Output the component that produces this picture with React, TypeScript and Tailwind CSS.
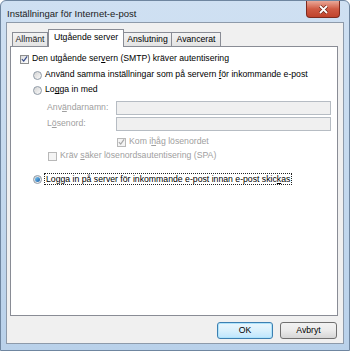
import React from "react";

const font = { fontFamily: '"Liberation Sans", Arial, sans-serif' };

function Check({ disabled = false, checked = false }: { disabled?: boolean; checked?: boolean }) {
  return (
    <div
      className={
        "w-[9px] h-[9px] shrink-0 border flex items-center justify-center " +
        (disabled
          ? "border-[#b8b8b8] bg-[#f4f4f4]"
          : "border-[#8e8f8f] bg-gradient-to-br from-[#dcdcdc] to-[#ffffff]")
      }
    >
      {checked && (
        <svg width="8" height="8" viewBox="0 0 8 8">
          <path
            d="M1 4.2 L3.1 6.4 L7 1"
            fill="none"
            stroke={disabled ? "#a9a9a9" : "#3b4f8c"}
            strokeWidth="1.4"
          />
        </svg>
      )}
    </div>
  );
}

function Radio({ selected = false }: { selected?: boolean }) {
  return (
    <div className="w-[9px] h-[9px] shrink-0 rounded-full border border-[#8f9aa6] bg-gradient-to-br from-[#d4d4d4] to-[#fafafa] flex items-center justify-center">
      {selected && (
        <div className="w-[5px] h-[5px] rounded-full bg-gradient-to-br from-[#7ecbf5] to-[#1a5fa8]" />
      )}
    </div>
  );
}

const U = ({ c }: { c: string }) => <span className="underline underline-offset-[1px]">{c}</span>;

export default function App() {
  return (
    <div
      className="w-[350px] h-[351px] flex flex-col rounded-t-[6px] border border-[#6f86a0] bg-gradient-to-b from-[#cfe0f2] via-[#c4d9ee] to-[#b9d1ea] text-[8.7px] text-black overflow-hidden"
      style={font}
    >
      {/* Title bar */}
      <div className="h-[21px] shrink-0 flex items-start">
        <div className="pl-[6px] pt-[7px] text-[9.5px] leading-[11px] text-[#1b1b1b]">
          Inställningar för Internet-e-post
        </div>
        <div className="ml-auto mr-[9px] w-[34px] h-[17px] rounded-b-[4px] border border-t-0 border-[#7e2a1e] bg-gradient-to-b from-[#e9a898] via-[#cf5a43] to-[#c0432c] flex items-center justify-center">
          <svg width="11" height="9" viewBox="0 0 11 9">
            <path d="M2 1 L9 8 M9 1 L2 8" stroke="#6b2417" strokeWidth="3.2" />
            <path d="M2 1 L9 8 M9 1 L2 8" stroke="#ffffff" strokeWidth="1.8" />
          </svg>
        </div>
      </div>

      {/* Client area */}
      <div className="flex-1 mx-[5px] mb-[6px] border border-[#8d9aaa] bg-[#f0f0f0] flex flex-col pl-[3px] pr-[5px] pt-[6px]">
        {/* Tabs */}
        <div className="flex items-end h-[17px] pl-[2px] relative z-10">
          <div className="h-[14px] px-[3px] border border-b-0 border-[#898c95] bg-gradient-to-b from-[#f3f3f3] to-[#e3e3e3] flex items-center text-[#1e1e1e] w-[36px] justify-center">
            Allmänt
          </div>
          <div className="h-[18px] -mb-[1px] w-[76px] border border-b-0 border-[#898c95] bg-white flex items-center justify-center pb-[2px]">
            Utgående server
          </div>
          <div className="h-[14px] w-[48px] border border-b-0 border-l-0 border-[#898c95] bg-gradient-to-b from-[#f3f3f3] to-[#e3e3e3] flex items-center justify-center">
            Anslutning
          </div>
          <div className="h-[14px] w-[49px] border border-b-0 border-l-0 border-[#898c95] bg-gradient-to-b from-[#f3f3f3] to-[#e3e3e3] flex items-center justify-center">
            Avancerat
          </div>
        </div>

        {/* Panel */}
        <div className="h-[270px] border border-[#898c95] bg-white flex flex-col pl-[9px] pr-[5px]">
          <div className="mt-[5px] h-[14px] flex items-center gap-[3px]">
            <Check checked />
            <span>
              Den utgående ser<U c="v" />ern (SMTP) kräver autentisering
            </span>
          </div>
          <div className="mt-[2px] h-[14px] flex items-center gap-[3px] pl-[13px]">
            <Radio />
            <span>
              Använd samma inställningar som på servern <U c="f" />ör inkommande e-post
            </span>
          </div>
          <div className="mt-[1px] h-[14px] flex items-center gap-[3px] pl-[13px]">
            <Radio />
            <span>
              Lo<U c="g" />ga in med
            </span>
          </div>
          <div className="mt-[4px] h-[14px] flex items-center pl-[27px]">
            <span className="w-[69px] text-[#a0a0a0]">
              Anv<U c="ä" />ndarnamn:
            </span>
            <div className="w-[215px] h-[14px] border border-[#b6bcc3] bg-[#f0f0f0]" />
          </div>
          <div className="mt-[2px] h-[14px] flex items-center pl-[27px]">
            <span className="w-[69px] text-[#a0a0a0]">
              L<U c="ö" />senord:
            </span>
            <div className="w-[215px] h-[14px] border border-[#b6bcc3] bg-[#f0f0f0]" />
          </div>
          <div className="mt-[4px] h-[14px] flex items-center gap-[3px] pl-[97px] text-[#a0a0a0]">
            <Check checked disabled />
            <span>
              Kom i<U c="h" />åg lösenordet
            </span>
          </div>
          <div className="mt-[0px] h-[14px] flex items-center gap-[3px] pl-[28px] text-[#a0a0a0]">
            <Check disabled />
            <span>
              Kräv <U c="s" />äker lösenordsautentisering (SPA)
            </span>
          </div>
          <div className="mt-[9px] h-[14px] flex items-center gap-[2px] pl-[13px]">
            <Radio selected />
            <span className="border border-dotted border-[#222] px-[1px] leading-[10px]">
              Logga in på server för inkommande e-post innan e-post skic<U c="k" />as
            </span>
          </div>
        </div>

        {/* Buttons */}
        <div className="flex justify-end gap-[7px] mt-[6px] pr-[1px]">
          <div className="w-[56px] h-[17px] rounded-[3px] border border-[#3c7fb1] bg-gradient-to-b from-[#eaf6fd] via-[#d9f0fc] to-[#bee6fd] flex items-center justify-center shadow-[inset_0_0_0_1px_#aee3fb]">
            OK
          </div>
          <div className="w-[57px] h-[17px] rounded-[3px] border border-[#707070] bg-gradient-to-b from-[#f2f2f2] via-[#ebebeb] to-[#d6d6d6] flex items-center justify-center">
            Avbryt
          </div>
        </div>
      </div>
    </div>
  );
}
